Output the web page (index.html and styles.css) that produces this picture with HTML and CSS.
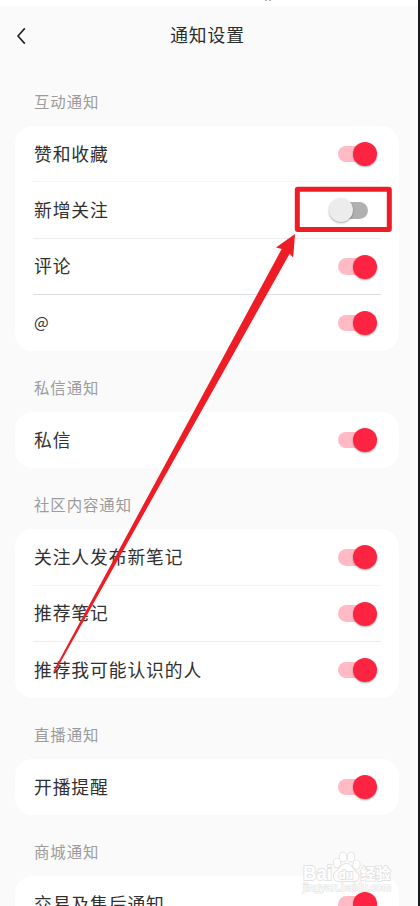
FILE: index.html
```
<!DOCTYPE html>
<html lang="zh-CN">
<head>
    <meta charset="UTF-8">
    <meta name="viewport" content="width=device-width, initial-scale=1.0">
    <title>通知设置</title>
    <link rel="stylesheet" href="styles.css">
</head>
<body>
    <div class="screen">
        <div class="status-bar"><span></span><span></span></div>
        <header class="header">
            <svg class="back" width="10" height="18" viewBox="0 0 10 18">
                <path d="M8.8 1.4 L2 9 L8.8 16.6" fill="none" stroke="#222" stroke-width="1.6"/>
            </svg>
            <h1>通知设置</h1>
        </header>
        <main class="content">
            <h2>互动通知</h2>
            <div class="card">
                <div class="row"><span>赞和收藏</span><i class="switch on"></i></div>
                <div class="row faint"><span>新增关注</span><i class="switch"></i></div>
                <div class="row light"><span>评论</span><i class="switch on"></i></div>
                <div class="row line"><span class="at">@</span><i class="switch on"></i></div>
            </div>
            <h2>私信通知</h2>
            <div class="card">
                <div class="row"><span>私信</span><i class="switch on"></i></div>
            </div>
            <h2>社区内容通知</h2>
            <div class="card">
                <div class="row"><span>关注人发布新笔记</span><i class="switch on"></i></div>
                <div class="row faint"><span>推荐笔记</span><i class="switch on"></i></div>
                <div class="row light"><span>推荐我可能认识的人</span><i class="switch on"></i></div>
            </div>
            <h2>直播通知</h2>
            <div class="card">
                <div class="row"><span>开播提醒</span><i class="switch on"></i></div>
            </div>
            <h2>商城通知</h2>
            <div class="card">
                <div class="row"><span>交易及售后通知</span><i class="switch on"></i></div>
            </div>
        </main>
        <svg class="overlay" width="420" height="906" viewBox="0 0 420 906">
            <rect x="297.3" y="189.2" width="92" height="40.4" rx="0.5" fill="none" stroke="#ee1c25" stroke-width="5" stroke-linejoin="round"/>
            <path d="M53.2 671.5 L281.7 249 L276 247.6 L295 234 L293.2 257.5 L289.6 253.8 L55 672 Z" fill="#ee1c25"/>
            <g class="watermark">
                <text x="303" y="880" class="wm-brand" textLength="29" lengthAdjust="spacingAndGlyphs">Bai</text>
                <ellipse cx="337" cy="863" rx="3.3" ry="4.4"/>
                <ellipse cx="343" cy="857" rx="3.3" ry="4.6"/>
                <ellipse cx="351" cy="857" rx="3.3" ry="4.6"/>
                <ellipse cx="356.5" cy="864.5" rx="3.2" ry="4.2"/>
                <path d="M346.5 864 C341 864 340 869 336 872 C332 876 334 881 339 881 L354 881 C359 881 360 876 357 873 C352 869 352 864 346.5 864 Z"/>
                <text x="338.5" y="879" class="wm-du">du</text>
                <text x="360.5" y="878.5" class="wm-cn">经验</text>
                <text x="303" y="891" class="wm-url" textLength="88">jingyan.baidu.com</text>
            </g>
        </svg>
    </div>
</body>
</html>
```

FILE: styles.css
```
* {
    box-sizing: border-box;
}
body {
    margin: 0;
    font-family: "Noto Sans CJK SC", sans-serif;
    color: #303030;
}
.screen {
    position: relative;
    height: 906px;
    overflow: hidden;
    background-color: #fafafa;
    border-right: 2px solid #19191b;
}
.status-bar {
    height: 6px;
    background-color: #fff;
    display: flex;
    gap: 2px;
    padding-left: 265px;
}
.status-bar span {
    width: 2px;
    height: 1px;
    background-color: #aaa;
}
.header {
    height: 59px;
    display: grid;
    grid-template-columns: 30px 1fr 34px;
    align-items: center;
}
.back {
    justify-self: end;
    margin-right: 4px;
}
h1 {
    margin: 0;
    padding-bottom: 4px;
    padding-left: 1px;
    font-size: 17.8px;
    font-weight: 400;
    letter-spacing: 0.9px;
    text-align: center;
    color: #2c2c2c;
}
.content {
    padding: 0 19px 0 15px;
}
h2 {
    margin: 0;
    height: 61px;
    padding: 12px 0 0 19px;
    font-size: 15.4px;
    font-weight: 400;
    letter-spacing: 0.95px;
    line-height: 48px;
    color: #9c9c9c;
}
.card {
    padding: 0 18px;
    background-color: #fff;
    border-radius: 18px;
}
.row {
    height: 56.25px;
    padding: 0 4px 0 1px;
    display: flex;
    align-items: center;
    justify-content: space-between;
    font-size: 17.8px;
    letter-spacing: 0.9px;
    background-repeat: no-repeat;
    background-size: 100% 1px;
}
.row span {
    padding-bottom: 2.5px;
}
.row .at {
    font-size: 15.5px;
    padding-bottom: 4px;
}
/* dividers, drawn at the top edge of a row */
.faint {
    background-image: linear-gradient(#f4f4f4, #f4f4f4);
}
.light {
    background-image: linear-gradient(#ececec, #ececec);
}
.line {
    background-image: linear-gradient(#dedede, #dedede);
}
.faint, .light, .line {
    margin-top: -1px;
    height: 57.25px;
    padding-top: 1px;
}
.switch {
    position: relative;
    width: 39px;
    height: 24px;
    display: flex;
    align-items: center;
}
.switch::before {
    content: "";
    width: 30px;
    height: 16.5px;
    border-radius: 9px;
    background-color: #b0b0b0;
}
.switch::after {
    content: "";
    position: absolute;
    left: -9px;
    top: 0;
    width: 24px;
    height: 24px;
    border-radius: 50%;
    background-color: #ececec;
    box-shadow: 0 1px 2px rgba(0, 0, 0, 0.35);
}
.switch.on::before {
    background-color: #ffbac5;
}
.switch.on::after {
    left: 15px;
    background-color: #fd2442;
}
.overlay {
    position: absolute;
    left: 0;
    top: 0;
}
.watermark {
    fill: #fff;
    stroke: #e2e2e2;
    stroke-width: 1.8px;
    paint-order: stroke;
    font-family: "Liberation Sans", "Noto Sans CJK SC", sans-serif;
}
.wm-brand {
    font-size: 20px;
    font-weight: bold;
}
.wm-du {
    font-size: 12px;
    font-weight: bold;
}
.wm-cn {
    font-size: 15px;
    font-weight: bold;
}
.wm-url {
    font-size: 10.6px;
    stroke-width: 1.2px;
}
```
